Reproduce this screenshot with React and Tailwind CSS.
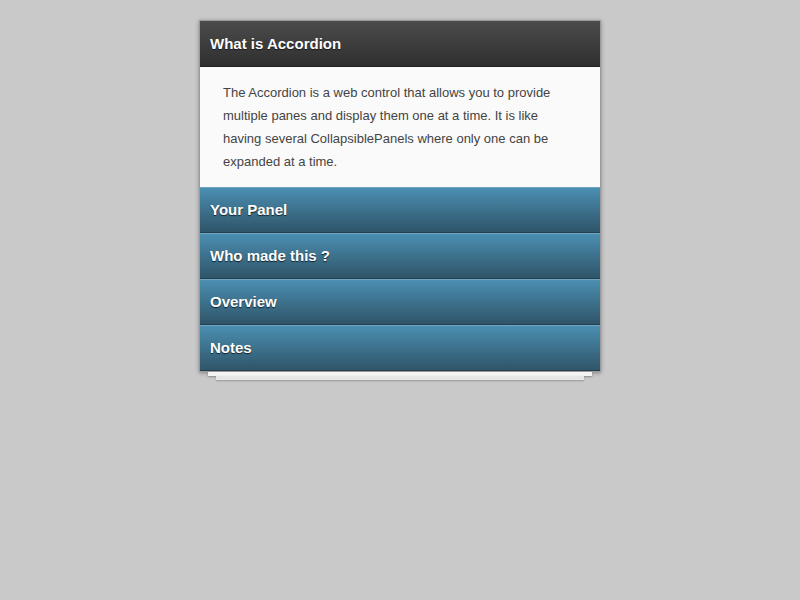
export default function App() {
  const panels = ["Your Panel", "Who made this ?", "Overview", "Notes"];
  return (
    <div className="min-h-[600px] w-full bg-[#c8c9c8] pt-[20px]" style={{ fontFamily: '"Liberation Sans", Arial, sans-serif' }}>
      <div className="mx-auto w-[402px]">
        <div className="border border-[#9a9a9a] shadow-[0_1px_4px_rgba(0,0,0,0.35)]">
          <div className="flex h-[46px] items-center border-b border-[#222] bg-gradient-to-b from-[#4c4c4c] to-[#2f2f2f] px-[10px] pt-[2px] text-[15px] font-bold text-white [text-shadow:0_1px_1px_rgba(0,0,0,0.6)]">
            What is Accordion
          </div>
          <div className="bg-[#fafafa] px-[23px] pt-[14px] pb-[14px] text-[13px] leading-[23px] text-[#444]">
            The Accordion is a web control that allows you to provide multiple panes and display them one at a time. It is like having several CollapsiblePanels where only one can be expanded at a time.
          </div>
          {panels.map((p) => (
            <div
              key={p}
              className="flex h-[46px] items-center border-t border-[#6fa3bf] border-b border-b-[#24404f] bg-gradient-to-b from-[#4b8fb2] to-[#2f5569] px-[10px] text-[15px] font-bold text-white [text-shadow:0_1px_1px_rgba(0,0,0,0.7)]"
            >
              {p}
            </div>
          ))}
        </div>
        <div className="mx-[9px] h-[4px] bg-[#f4f4f4] shadow-[0_1px_2px_rgba(0,0,0,0.3)]"></div>
        <div className="mx-[17px] h-[4px] bg-[#e6e6e6] shadow-[0_1px_2px_rgba(0,0,0,0.25)]"></div>
      </div>
    </div>
  );
}
